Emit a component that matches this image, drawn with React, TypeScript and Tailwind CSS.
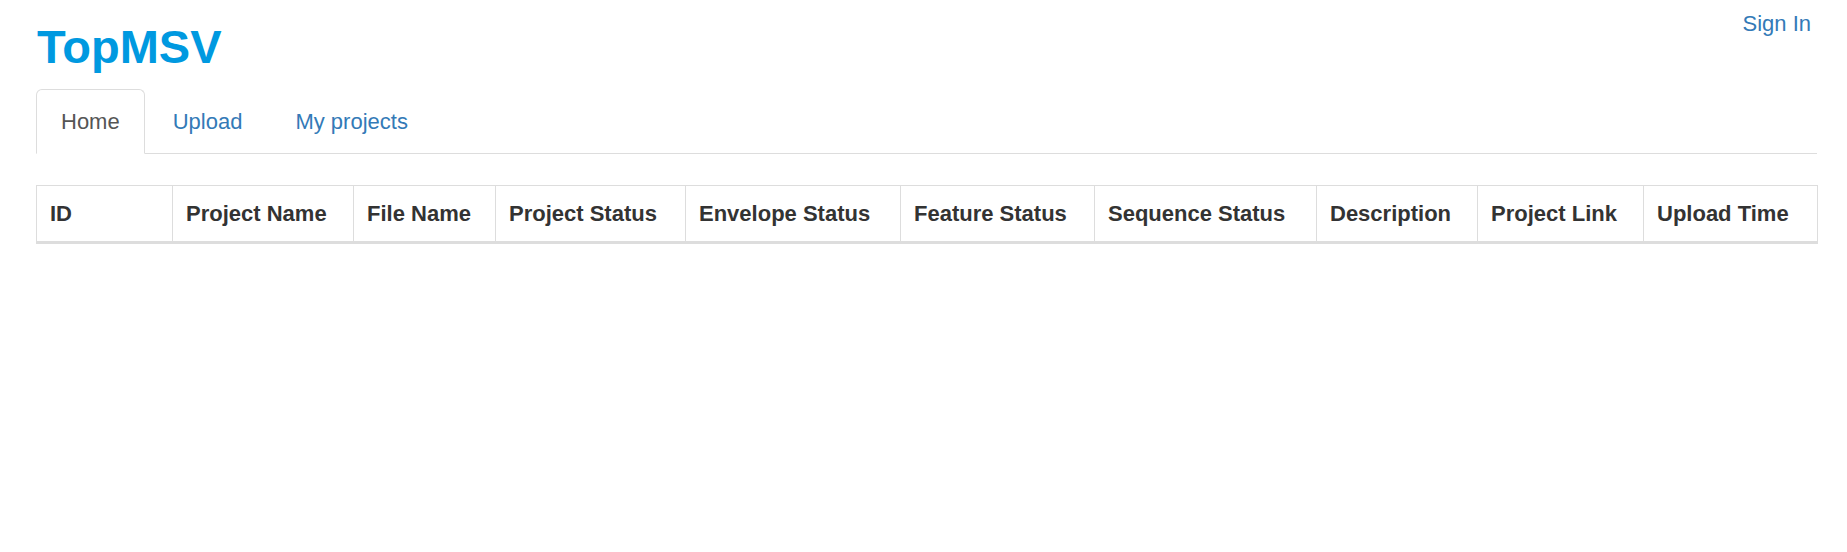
const tabs = ['Upload', 'My projects'];

const columns = [
  { title: 'ID', width: 'w-[136px]' },
  { title: 'Project Name', width: 'w-[181px]' },
  { title: 'File Name', width: 'w-[142px]' },
  { title: 'Project Status', width: 'w-[190px]' },
  { title: 'Envelope Status', width: 'w-[215px]' },
  { title: 'Feature Status', width: 'w-[194px]' },
  { title: 'Sequence Status', width: 'w-[222px]' },
  { title: 'Description', width: 'w-[161px]' },
  { title: 'Project Link', width: 'w-[166px]' },
  { title: 'Upload Time', width: 'w-[174px]' },
];

export default function App() {
  return (
    <div className="bg-white pr-[30px] pl-9 font-['Liberation_Sans',Arial,sans-serif] text-[22px] leading-[31px] text-[#333]">
      <header className="flex items-start justify-between">
        <h1 className="pt-5 pb-[15px] pl-px text-[47px] leading-[54px] font-bold text-[#0099e0]">TopMSV</h1>
        <a href="#signin" className="pt-2 pr-1.5 text-[#337ab7]">Sign In</a>
      </header>
      <nav className="border-b border-[#ddd]">
        <ul className="-mb-px flex gap-[3px]">
          <li>
            <a href="#home" aria-current="page" className="block rounded-t-md border border-[#ddd] border-b-white bg-white px-6 py-4 text-[#555]">Home</a>
          </li>
          {tabs.map((tab) => (
            <li key={tab}>
              <a href="#" className="block border border-transparent px-6 py-4 text-[#337ab7]">{tab}</a>
            </li>
          ))}
        </ul>
      </nav>
      <table className="mt-[31px] w-full table-fixed border-collapse border border-[#ddd]">
        <thead>
          <tr>
            {columns.map((column) => (
              <th key={column.title} scope="col" className={`${column.width} border border-b-3 border-[#ddd] px-[13px] py-3 text-left font-bold whitespace-nowrap`}>{column.title}</th>
            ))}
          </tr>
        </thead>
      </table>
    </div>
  );
}
